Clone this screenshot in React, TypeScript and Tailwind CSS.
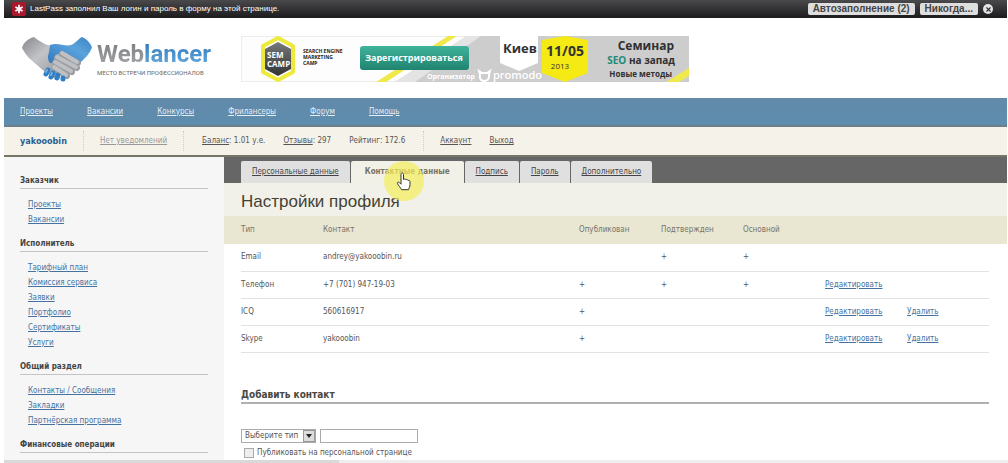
import { X } from "lucide-react";

interface Contact {
  type: string;
  value: string;
  published: boolean;
  confirmed: boolean;
  primary: boolean;
  canEdit: boolean;
  canDelete: boolean;
}

const contacts: Contact[] = [
  { type: "Email", value: "andrey@yakooobin.ru", published: false, confirmed: true, primary: true, canEdit: false, canDelete: false },
  { type: "Телефон", value: "+7 (701) 947-19-03", published: true, confirmed: true, primary: true, canEdit: true, canDelete: false },
  { type: "ICQ", value: "560616917", published: true, confirmed: false, primary: false, canEdit: true, canDelete: true },
  { type: "Skype", value: "yakooobin", published: true, confirmed: false, primary: false, canEdit: true, canDelete: true },
];

const navLinks = ["Проекты", "Вакансии", "Конкурсы", "Фрилансеры", "Форум", "Помощь"];

const tabs = ["Персональные данные", "Контактные данные", "Подпись", "Пароль", "Дополнительно"];

const sections = [
  { title: "Заказчик", links: ["Проекты", "Вакансии"] },
  {
    title: "Исполнитель",
    links: ["Тарифный план", "Комиссия сервиса", "Заявки", "Портфолио", "Сертификаты", "Услуги"],
  },
  { title: "Общий раздел", links: ["Контакты / Сообщения", "Закладки", "Партнёрская программа"] },
  { title: "Финансовые операции", links: [] },
];

function LastPassBar() {
  return (
    <div className="flex h-[18px] items-center bg-linear-to-b from-[#4a4a4c] to-[#1c1c1e] pr-3.5 pl-1 font-['Liberation_Sans',sans-serif]">
      <span className="mr-1 ml-1 flex h-3.5 w-3.5 items-center justify-center rounded-xs bg-[#a8192e]">
        <svg viewBox="0 0 12 12" className="h-2.5 w-2.5" stroke="#fff" strokeWidth="2">
          <path d="M6 1v10M1.7 3.5l8.6 5M10.3 3.5l-8.6 5" />
        </svg>
      </span>
      <p className="flex-1 text-[8px] text-white">
        LastPass заполнил Ваш логин и пароль в форму на этой странице.
      </p>
      <div className="flex items-center gap-[5px]">
        <button className="h-3 rounded-xs bg-[#dedede] px-[5px] text-[10px] leading-3 font-bold text-[#444]">
          Автозаполнение (2)
        </button>
        <button className="h-3 rounded-xs bg-[#dedede] px-[5px] text-[10px] leading-3 font-bold text-[#444]">
          Никогда...
        </button>
        <button aria-label="Закрыть" className="flex h-2.5 w-2.5 items-center justify-center rounded-full bg-[#e4e4e4]">
          <X size={7} strokeWidth={4} color="#333" />
        </button>
      </div>
    </div>
  );
}

function Handshake() {
  return (
    <svg viewBox="0 0 72 46" className="h-[46px] w-[72px] shrink-0">
      <defs>
        <linearGradient id="armGrey" x1="0" y1="0" x2="1" y2="1">
          <stop offset="0" stopColor="#85878b" />
          <stop offset="0.4" stopColor="#c3c4c8" />
          <stop offset="1" stopColor="#898b90" />
        </linearGradient>
        <linearGradient id="armBlue" x1="0" y1="1" x2="1" y2="0">
          <stop offset="0" stopColor="#2f78bd" />
          <stop offset="0.6" stopColor="#5ba3dc" />
          <stop offset="1" stopColor="#3b82c4" />
        </linearGradient>
      </defs>
      <path d="M13 1C8 2 2 7 1 12c4 8 9 12 15 17 5 5 11 9 17 13l12-7 6-19-14-6c-8 1-15-2-24-9z" fill="url(#armGrey)" />
      <path d="M29 9c8-3 15 2 21 0 5-2 7-6 11-8 5 2 8 6 10 10-2 7-7 11-13 17l-4-3-8-8c-5 1-9 0-11 2-1 4-3 9-6 8-3-4-2-8-1-11z" fill="url(#armBlue)" />
      <g strokeLinecap="round" fill="none">
        <path d="M36 22l20 10M34 27l17 9M33 32l13 8M41 18l16 9" stroke="#9a9ca1" strokeWidth="6" />
        <path d="M36 21l19 10M34 26l16 9M33 31l12 8M41 17l15 9" stroke="#bec0c4" strokeWidth="4" />
        <path d="M27 34l-2 4M32 37l-2 4M37 39l-1 3M42 42v1" stroke="#2f7fc6" strokeWidth="5" />
        <path d="M26 34l-1 2M31 37l-1 2" stroke="#66b1e8" strokeWidth="2" />
      </g>
    </svg>
  );
}

function Banner() {
  return (
    <a href="#semcamp" aria-label="SEM Camp">
      <svg viewBox="0 0 448 46" className="h-[46px] w-[448px]" fontFamily="'Open Sans', 'Noto Sans', sans-serif" fontWeight="700">
        <defs>
          <linearGradient id="green" x1="0" y1="0" x2="0" y2="1">
            <stop offset="0" stopColor="#41b39b" />
            <stop offset="1" stopColor="#1f8370" />
          </linearGradient>
          <linearGradient id="hex" x1="0" y1="0" x2="0" y2="1">
            <stop offset="0" stopColor="#77787a" />
            <stop offset="1" stopColor="#333436" />
          </linearGradient>
        </defs>
        <rect x="0.5" y="0.5" width="446" height="45" fill="#fdfdfd" stroke="#ececec" />
        <path d="M154 46L226 0H448V46z" fill="#cdcdce" />
        <path d="M154 46L226 0h14l-66 46z" fill="#e4e4e4" />
        <path d="M135 46L207 0h9L145 46z" fill="#efe94b" />
        <path d="M425 46l23-14v8l-10 6z" fill="#efe94b" />
        <path d="M37 2l15 8v26l-15 8-15-8V10z" fill="#fff" stroke="#eeea3c" strokeWidth="4" strokeLinejoin="round" />
        <path d="M37 6l13 7v20l-13 7-13-7V13z" fill="url(#hex)" />
        <text x="26" y="22" fontSize="8" fill="#fff">SEM</text>
        <text x="26" y="31" fontSize="8" fill="#fff">CAMP</text>
        <g fontSize="5" fill="#222">
          <text x="62" y="17">SEARCH ENGINE</text>
          <text x="62" y="23">MARKETING</text>
          <text x="62" y="29">CAMP</text>
        </g>
        <rect x="119" y="10" width="109" height="24" rx="3" fill="url(#green)" />
        <text x="173" y="25" fontSize="9" fill="#fff" textAnchor="middle">Зарегистрироваться</text>
        <text x="186" y="43" fontSize="7" fill="#fff">Организатор</text>
        <path d="M238 35l3 2h5l3-2-1 4c1 4-2 6-5 6s-5-3-4-6z" fill="none" stroke="#fff" strokeWidth="2" />
        <path d="M259 0h38v27l-19 8-19-8z" fill="#fff" />
        <text x="252" y="43" fontSize="11" fontWeight="600" fill="#fff">promodo</text>
        <text x="279" y="17" fontSize="13" fill="#333" textAnchor="middle">Киев</text>
        <path d="M301 4l23-4 23 4v33l-23 9-23-9z" fill="#f5ea14" />
        <text x="324" y="20" fontSize="14" fill="#333" textAnchor="middle">11/05</text>
        <text x="319" y="33" fontSize="8" fontWeight="400" fill="#333" textAnchor="middle">2013</text>
        <g textAnchor="end" fill="#2f3032">
          <text x="433" y="14" fontSize="12">Семинар</text>
          <text x="434" y="28" fontSize="10">
            <tspan fill="#218b75">SEO</tspan> на запад
          </text>
          <text x="431" y="41" fontSize="8">Новые методы</text>
        </g>
      </svg>
    </a>
  );
}

function Header() {
  return (
    <header className="flex h-20 items-start gap-[33px] pt-[18px] pl-[17px]">
      <a href="#home" className="flex w-[187px] gap-1">
        <Handshake />
        <span className="font-['Roboto',sans-serif] whitespace-nowrap">
          <span className="block pt-1 text-[24px] leading-7 font-bold">
            <span className="bg-linear-to-b from-[#77797c] to-[#a9abae] bg-clip-text text-transparent">Web</span>
            <span className="bg-linear-to-b from-[#2a72b5] to-[#6bb0e0] bg-clip-text text-transparent">lancer</span>
          </span>
          <span className="block text-[6px] leading-[10px] text-[#666]">МЕСТО ВСТРЕЧИ ПРОФЕССИОНАЛОВ</span>
        </span>
      </a>
      <Banner />
    </header>
  );
}

function UserBar() {
  return (
    <div className="flex h-[30px] items-center border-b-2 border-[#77756a] bg-[#f5f2ea] pl-4 text-[#555]">
      <a href="#me" className="text-[9px] font-bold text-[#2a5f92]">yakooobin</a>
      <div className="ml-4 flex h-5 items-center border-x border-dotted border-[#ccc] px-4">
        <a href="#notices" className="text-[#999] underline">Нет уведомлений</a>
      </div>
      <div className="flex h-5 items-center gap-[18px] border-r border-dotted border-[#ccc] px-[18px]">
        <span><a href="#balance" className="underline">Баланс</a>: 1.01 у.е.</span>
        <span><a href="#reviews" className="underline">Отзывы</a>: 297</span>
        <span>Рейтинг: 172.6</span>
      </div>
      <a href="#account" className="ml-4 underline">Аккаунт</a>
      <a href="#logout" className="ml-[18px] underline">Выход</a>
    </div>
  );
}

function Sidebar() {
  return (
    <aside className="w-[220px] shrink-0 bg-[#f6f6f6] px-4 pt-[17px]">
      {sections.map((section) => (
        <section key={section.title} className="mb-2.5">
          <h2 className="mb-2 border-b border-[#c4c4c4] pt-px pb-px font-bold text-[#444]">{section.title}</h2>
          <ul className="pl-2">
            {section.links.map((link) => (
              <li key={link} className="leading-[15px]">
                <a href="#section" className="text-[#4572a0] underline">{link}</a>
              </li>
            ))}
          </ul>
        </section>
      ))}
    </aside>
  );
}

// подсветка курсора поверх вкладки
function Pointer() {
  return (
    <svg viewBox="0 0 40 40" className="pointer-events-none absolute top-0 left-[33px] z-10 h-10 w-10">
      <circle cx="20" cy="20" r="20" fill="#f5ee5a" fillOpacity="0.7" />
      <path
        d="M17 13.500c0-2 2.500-2 2.500 0v5c1-.8 2-.5 2.300.3 1-.6 2-.2 2.300.7 1-.3 1.900.1 1.900 1.200v3c0 2-1 3-1.500 5h-7c-.8-2-3-4-4-6-.6-1.400.8-2.200 2-1l1.500 1.500z"
        fill="#fff"
        stroke="#333"
      />
    </svg>
  );
}

function Tabs() {
  return (
    <div className="flex h-[26px] items-end gap-px bg-[#666] pl-[17px]">
      {tabs.map((tab, i) =>
        i === 1 ? (
          <div key={tab} className="relative">
            <a href="#tab" className="flex h-[22px] items-center rounded-t-xs bg-[#f2f1e8] px-3.5 font-bold text-[#777462]">
              {tab}
            </a>
            <Pointer />
          </div>
        ) : (
          <a key={tab} href="#tab" className="flex h-[22px] items-center rounded-t-xs bg-[#e0e0e0] px-[11px] text-[#444] underline">
            {tab}
          </a>
        )
      )}
    </div>
  );
}

function ContactsTable() {
  return (
    <div className="bg-[linear-gradient(#e9e6d1_28px,#fff_28px)] pr-[18px] pl-[17px]">
      <table className="w-full table-fixed text-left text-[#555]">
        <thead>
          <tr className="h-7 text-[#77746a]">
            <th className="w-[82px] font-normal">Тип</th>
            <th className="font-normal">Контакт</th>
            <th className="w-[82px] font-normal">Опубликован</th>
            <th className="w-[82px] font-normal">Подтвержден</th>
            <th className="w-[82px] font-normal">Основной</th>
            <th className="w-[82px]"></th>
            <th className="w-[82px]"></th>
          </tr>
        </thead>
        <tbody>
          {contacts.map((c) => (
            <tr key={c.type} className="h-[27px] border-b border-[#e2e2e2]">
              <td>{c.type}</td>
              <td>{c.value}</td>
              <td>{c.published && "+"}</td>
              <td>{c.confirmed && "+"}</td>
              <td>{c.primary && "+"}</td>
              <td>{c.canEdit && <a href="#edit" className="text-[#4572a0] underline">Редактировать</a>}</td>
              <td>{c.canDelete && <a href="#delete" className="text-[#4572a0] underline">Удалить</a>}</td>
            </tr>
          ))}
        </tbody>
      </table>
    </div>
  );
}

function AddContact() {
  return (
    <form className="pt-9 pr-[18px] pl-[17px] text-[#555]">
      <h2 className="border-b-2 border-[#b0b0b0] pb-px text-[10px] font-bold text-[#4a4840]">Добавить контакт</h2>
      <div className="mt-[25px] flex gap-1">
        <div className="relative">
          <select aria-label="Тип контакта" className="block h-[14px] w-[75px] appearance-none border border-[#aaa] bg-white pl-[3px] leading-3">
            <option>Выберите тип</option>
            <option>Email</option>
            <option>Телефон</option>
            <option>ICQ</option>
            <option>Skype</option>
          </select>
          <span className="pointer-events-none absolute top-px right-px flex h-3 w-3 items-center justify-center border border-[#999] bg-[#ddd]">
            <svg viewBox="0 0 6 4" className="h-1 w-1.5"><path d="M0 0h6L3 4z" fill="#222" /></svg>
          </span>
        </div>
        <input type="text" aria-label="Контакт" className="h-[14px] w-[98px] border border-[#aaa] bg-white px-1" />
      </div>
      <label className="mt-1 flex items-center gap-[3px] pl-[3px]">
        <input type="checkbox" className="h-2.5 w-2.5 appearance-none border border-[#aaa] bg-[#eee]" />
        Публиковать на персональной странице
      </label>
    </form>
  );
}

export default function App() {
  return (
    <div className="min-h-screen bg-white pr-px pl-1 font-['DejaVu_Sans_Condensed','DejaVu_Sans',sans-serif] text-[8px] leading-3">
      <LastPassBar />
      <Header />
      <nav className="flex h-[29px] items-center gap-[34px] border-b-2 border-[#6d7f8c] bg-linear-to-b from-[#6389a9] to-[#5d8dae] pl-4">
        {navLinks.map((link) => (
          <a key={link} href="#nav" className="text-[#e4eef5] underline">{link}</a>
        ))}
      </nav>
      <UserBar />
      <div className="flex">
        <Sidebar />
        <main className="min-w-0 flex-1">
          <Tabs />
          <h1 className="bg-[#f1f0e9] pt-1 pl-[17px] font-['Liberation_Sans',sans-serif] text-[17px] leading-[29px] text-[#444234]">
            Настройки профиля
          </h1>
          <ContactsTable />
          <AddContact />
        </main>
      </div>
      <div className="fixed right-0 bottom-0 left-1 flex h-[3px] bg-[#eee]">
        <div className="w-1/3 bg-[#d9d9d9]" />
      </div>
    </div>
  );
}
